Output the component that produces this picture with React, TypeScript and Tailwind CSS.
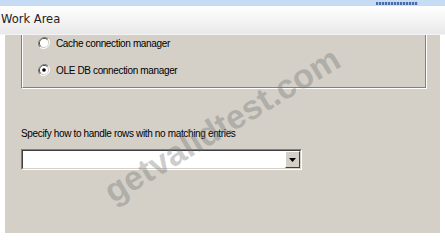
import React from "react";

function Radio({ checked }: { checked?: boolean }) {
  return (
    <svg width="12" height="12" viewBox="0 0 12 12" className="shrink-0">
      <path d="M10.2 1.8 A6 6 0 0 0 1.8 10.2" fill="none" stroke="#808080" strokeWidth="1" />
      <path d="M1.8 10.2 A6 6 0 0 0 10.2 1.8" fill="none" stroke="#ffffff" strokeWidth="1" />
      <path d="M9.5 2.5 A5 5 0 0 0 2.5 9.5" fill="none" stroke="#404040" strokeWidth="1" />
      <path d="M2.5 9.5 A5 5 0 0 0 9.5 2.5" fill="none" stroke="#d4d0c8" strokeWidth="1" />
      <circle cx="6" cy="6" r="4" fill="#ffffff" />
      {checked && <circle cx="6" cy="6" r="1.8" fill="#000000" />}
    </svg>
  );
}

export default function App() {
  return (
    <div
      className="relative w-[445px] h-[241px] overflow-hidden bg-white"
      style={{ fontFamily: '"Liberation Sans", Arial, sans-serif' }}
    >
      <div className="h-[6px] bg-[#c6dcf4] flex justify-end items-center pr-[27px]">
        <div className="w-[42px] h-[3px] bg-[repeating-linear-gradient(90deg,#4a6fa8_0px,#4a6fa8_2px,#a9c4e6_2px,#a9c4e6_3px)]" />
      </div>
      <div
        className="h-[28px] flex items-center pl-[1px] bg-gradient-to-b from-white to-[#e9e9e9] text-[11.5px] text-[#222222]"
        style={{ fontFamily: '"DejaVu Sans", Verdana, sans-serif' }}
      >
        Work Area
      </div>
      <div className="h-px bg-[#f4f4f4]" />
      <div className="ml-[5px] w-[435px] h-[198px] bg-[#d4d0c8] text-[10px] tracking-[-0.35px] text-black">
        <div className="ml-[16px] w-[406px] h-[54px] border-l border-r border-b border-l-[#808080] border-r-white border-b-white">
          <div className="h-full border-l border-r border-b border-l-white border-r-[#808080] border-b-[#808080] pl-[15px] pt-[2px] flex flex-col gap-[15px]">
            <div className="flex items-center gap-[6px] h-[12px]">
              <Radio />
              <span>Cache connection manager</span>
            </div>
            <div className="flex items-center gap-[6px] h-[12px]">
              <Radio checked />
              <span>OLE DB connection manager</span>
            </div>
          </div>
        </div>
        <div className="ml-[16px] mt-[37px] h-[14px] flex items-center">
          Specify how to handle rows with no matching entries
        </div>
        <div className="ml-[16px] mt-[9px] w-[281px] h-[21px] border border-t-[#808080] border-l-[#808080] border-r-white border-b-white">
          <div className="h-full border border-t-[#404040] border-l-[#404040] border-r-[#d4d0c8] border-b-[#d4d0c8] bg-white flex justify-end">
            <div className="w-[15px] h-full bg-[#d4d0c8] border border-t-[#ffffff] border-l-[#ffffff] border-r-[#404040] border-b-[#404040] flex items-center justify-center">
              <svg width="7" height="4" viewBox="0 0 7 4">
                <path d="M0 0 H7 L3.5 4 Z" fill="#000" />
              </svg>
            </div>
          </div>
        </div>
      </div>
      <div
        className="absolute left-[222px] top-[125px] -translate-x-1/2 -translate-y-1/2 -rotate-[31deg] whitespace-nowrap text-[34px] font-bold text-[rgba(110,110,110,0.35)] pointer-events-none"
        style={{ fontFamily: '"Liberation Sans", Arial, sans-serif' }}
      >
        getvalidtest.com
      </div>
    </div>
  );
}
